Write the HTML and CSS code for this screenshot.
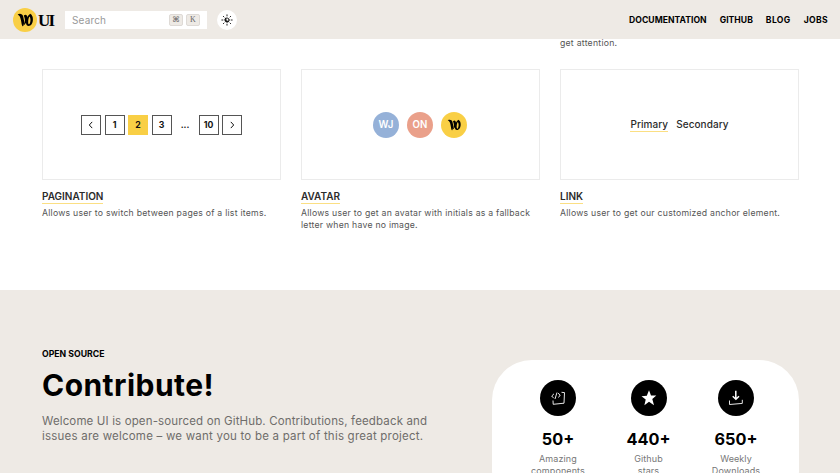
FILE: index.html
```html
<!DOCTYPE html>
<html lang="en">
<head>
<meta charset="utf-8">
<title>Welcome UI</title>
<link rel="stylesheet" href="styles.css">
</head>
<body>
<svg class="defs" width="0" height="0">
  <symbol id="mark" viewBox="0 0 24 24">
    <path d="M4.6 6.4C7 5.2 9.5 5.8 10.2 8.6L11.4 14.4L9.7 18.4C8.4 17.2 8.6 15 7.9 12.1C7.3 9 6.7 7.4 4.6 6.4Z"/>
    <path d="M9.4 18.2C12.6 14.8 12.3 11.3 10.8 7.6C12.8 5.9 14.2 7 14.4 10C14.5 13.1 13 16 9.4 18.2Z"/>
    <path fill-rule="evenodd" d="M17.2 5.8C19.3 7 20 9.1 19.9 11.8C19.8 15.2 18.1 18 15.6 18C13.3 18 12.6 15.4 13.3 12.3C13.9 9.2 15.3 7.1 17.2 5.8ZM16.5 8.4C15.2 10.1 14.7 15.7 15.9 16.3C17.5 16.1 18.2 10.1 16.5 8.4Z"/>
  </symbol>
</svg>
<header class="topbar">
  <a class="brand"><svg class="brand-mark"><use href="#mark"/></svg><span class="brand-name">UI</span></a>
  <div class="search"><span class="search-text">Search</span><kbd>⌘</kbd><kbd>K</kbd></div>
  <button class="theme" aria-label="Theme">
    <svg width="12" height="12" viewBox="0 0 12 12" fill="none" stroke="#111" stroke-width=".9" stroke-linecap="round">
      <circle cx="6" cy="6" r="2.1"/><path d="M4.6 4.4A2.2 2.2 0 0 0 7.5 7.6A3 3 0 0 1 4.6 4.4Z" fill="#111"/>
      <path d="M6 .8V1.9M6 10.1V11.2M.8 6H1.9M10.1 6H11.2M2.3 2.3L3 3M9 9L9.7 9.7M2.3 9.7L3 9M9 3L9.7 2.3"/>
    </svg>
  </button>
  <nav class="nav"><a>DOCUMENTATION</a><a>GITHUB</a><a class="short">BLOG</a><a class="short">JOBS</a></nav>
</header>
<main>
  <section class="components">
    <p class="desc previous">get attention.</p>
    <div class="grid">
      <article>
        <div class="preview pages">
          <span class="page"><svg width="10" height="10" viewBox="0 0 10 10"><path d="M6.2 1.9L3.3 5L6.2 8.1"/></svg></span><span class="page">1</span><span class="page active">2</span><span class="page">3</span><span class="page dots">...</span><span class="page">10</span><span class="page"><svg width="10" height="10" viewBox="0 0 10 10"><path d="M3.8 1.9L6.7 5L3.8 8.1"/></svg></span>
        </div>
        <h3>PAGINATION</h3>
        <p class="desc">Allows user to switch between pages of a list items.</p>
      </article>
      <article>
        <div class="preview avatars">
          <span class="avatar blue">WJ</span><span class="avatar coral">ON</span><svg class="avatar gold" viewBox="-1 -1 26 26"><use href="#mark" width="24" height="24"/></svg>
        </div>
        <h3>AVATAR</h3>
        <p class="desc">Allows user to get an avatar with initials as a fallback<br>letter when have no image.</p>
      </article>
      <article>
        <div class="preview links"><a class="primary">Primary</a><a>Secondary</a></div>
        <h3>LINK</h3>
        <p class="desc">Allows user to get our customized anchor element.</p>
      </article>
    </div>
  </section>
  <section class="contribute">
    <div class="intro">
      <h4>OPEN SOURCE</h4>
      <h2>Contribute!</h2>
      <p>Welcome UI is open-sourced on GitHub. Contributions, feedback and<br><span class="wide">issues are welcome – we want you to be a part of this great project.</span></p>
    </div>
    <div class="stats">
      <div class="stat">
        <span class="disc"><svg width="16" height="16" viewBox="0 0 16 16" fill="none" stroke="#fff" stroke-width=".9"><path d="M4 3.8L1.7 6L3.7 8.2M8 3.2L10.2 5L8.5 7.5M7 2.5L5 9M11.5 2.3L14.5 2.6L14 13.2L3.2 14.3L3 10.5"/></svg></span>
        <strong>50+</strong><span class="label">Amazing<br>components</span>
      </div>
      <div class="stat">
        <span class="disc"><svg width="16" height="16" viewBox="0 0 16 16" fill="#fff"><path d="M8 .3L10 5.4L15.3 5.6L11.3 9L13 15.2L8 11.8L3.4 15.3L4.7 9.5L.5 6.3L5.8 5.7Z"/></svg></span>
        <strong>440+</strong><span class="label">Github<br>stars</span>
      </div>
      <div class="stat">
        <span class="disc"><svg width="16" height="16" viewBox="0 0 16 16" fill="none" stroke="#fff"><path stroke-width="1.5" d="M7.8 .8V8.8M4.7 6.3L7.9 9.3L11 6.3"/><path stroke-width=".9" d="M1.5 10.5V14.5L14.3 13.4V9.8"/></svg></span>
        <strong>650+</strong><span class="label">Weekly<br>Downloads</span>
      </div>
    </div>
  </section>
</main>
</body>
</html>
```

FILE: styles.css
```css
* { box-sizing: border-box; }
body { margin: 0; height: 473px; overflow: hidden; background: #fff; color: #2b2b2b; font-family: Inter, "Liberation Sans", sans-serif; }
h2, h3, h4, p { margin: 0; }
.defs { position: absolute; }
.topbar { display: flex; align-items: center; height: 39px; padding: 0 12px 0 13px; background: #eeeae5; }
.brand { display: flex; align-items: center; width: 52px; gap: 1px; }
.brand-mark { width: 24px; height: 24px; border-radius: 50%; background: #f9cf45; flex: none; }
.brand-name { font: bold 17px/24px "Liberation Serif", serif; color: #000; letter-spacing: -1.8px; padding-top: 2px; }
.search { display: flex; align-items: center; width: 142px; height: 18px; padding: 0 7px 0 7px; margin-right: 10px; background: #fff; gap: 3px; }
.search-text { flex: 1; font-size: 10px; letter-spacing: .15px; color: #999; }
kbd { display: flex; align-items: center; justify-content: center; width: 14px; height: 12px; border: 1px solid #dedad6; border-radius: 2px; background: #eeeae5; font: 8px "Liberation Serif", "DejaVu Sans", serif; color: #666; }
.theme { display: flex; align-items: center; justify-content: center; width: 20px; height: 20px; padding: 0; border: 0; border-radius: 50%; background: #fff; }
.nav { display: flex; gap: 13px; margin-left: auto; font-size: 8.6px; font-weight: 700; color: #000; white-space: nowrap; letter-spacing: .03px; }
.short { letter-spacing: .35px; }
.components { height: 251px; padding: 0 41px 0 42px; }
.desc { font-size: 8.7px; line-height: 12px; color: #555; white-space: nowrap; letter-spacing: .24px; }
.previous { height: 30px; margin-left: 518px; line-height: 9px; }
.grid { display: grid; grid-template-columns: repeat(3, 239px); column-gap: 20px; }
.preview { display: flex; align-items: center; justify-content: center; height: 111px; border: 1px solid #ebebeb; }
h3 { width: max-content; height: 14px; margin: 10px 0 3px; border-bottom: 1px solid #fbdf83; font-size: 10px; line-height: 12px; font-weight: 600; }
.pages { gap: 3.5px; }
.page { display: flex; align-items: center; justify-content: center; width: 20px; height: 20px; border: 1px solid #555; font-size: 8.7px; font-weight: 700; color: #111; }
.page svg { fill: none; stroke: #111; stroke-width: 1; }
.page.active { border-color: #f9cf45; background: #f9cf45; }
.page.dots { border-color: transparent; }
.avatars { gap: 8px; padding-right: 1px; }
.avatar { display: flex; align-items: center; justify-content: center; width: 26px; height: 26px; border-radius: 50%; color: #fff; font-size: 9.7px; font-weight: 600; }
.blue { background: #95b1d8; }
.coral { background: #eaa08a; }
.gold { padding: 2px; background: #f9cf45; color: #000; }
.links { gap: 8px; font-size: 10px; font-weight: 500; letter-spacing: .07px; }
.links a { line-height: 14px; border-bottom: 1px solid transparent; }
.links .primary { border-color: #fbdf83; }
.contribute { display: flex; height: 183px; padding: 0 41px 0 42px; background: #eeeae5; justify-content: space-between; overflow: hidden; }
.intro { padding-top: 58px; white-space: nowrap; }
h4 { font-size: 8.7px; line-height: 12px; color: #000; }
h2 { margin-top: 6px; font-size: 30px; line-height: 38px; color: #000; font-weight: 700; letter-spacing: .45px; }
.intro p { margin-top: 10px; font-size: 11.5px; line-height: 15px; color: #6f6d6b; letter-spacing: .14px; }
.intro .wide { letter-spacing: .215px; }
.stats { display: flex; justify-content: center; width: 307px; height: 150px; margin-top: 70px; padding-top: 20px; border-radius: 40px; background: #fff; }
.stat { display: flex; flex-direction: column; align-items: center; width: 89px; }
.stat:first-child { width: 92px; }
.stat:last-child { width: 86px; }
.disc { display: flex; align-items: center; justify-content: center; width: 36px; height: 36px; border-radius: 50%; background: #000; }
.stat strong { margin-top: 13px; font-size: 16.3px; line-height: 20px; color: #000; }
.label { margin-top: 4px; font-size: 9px; line-height: 12px; color: #777; text-align: center; letter-spacing: .1px; }
```
